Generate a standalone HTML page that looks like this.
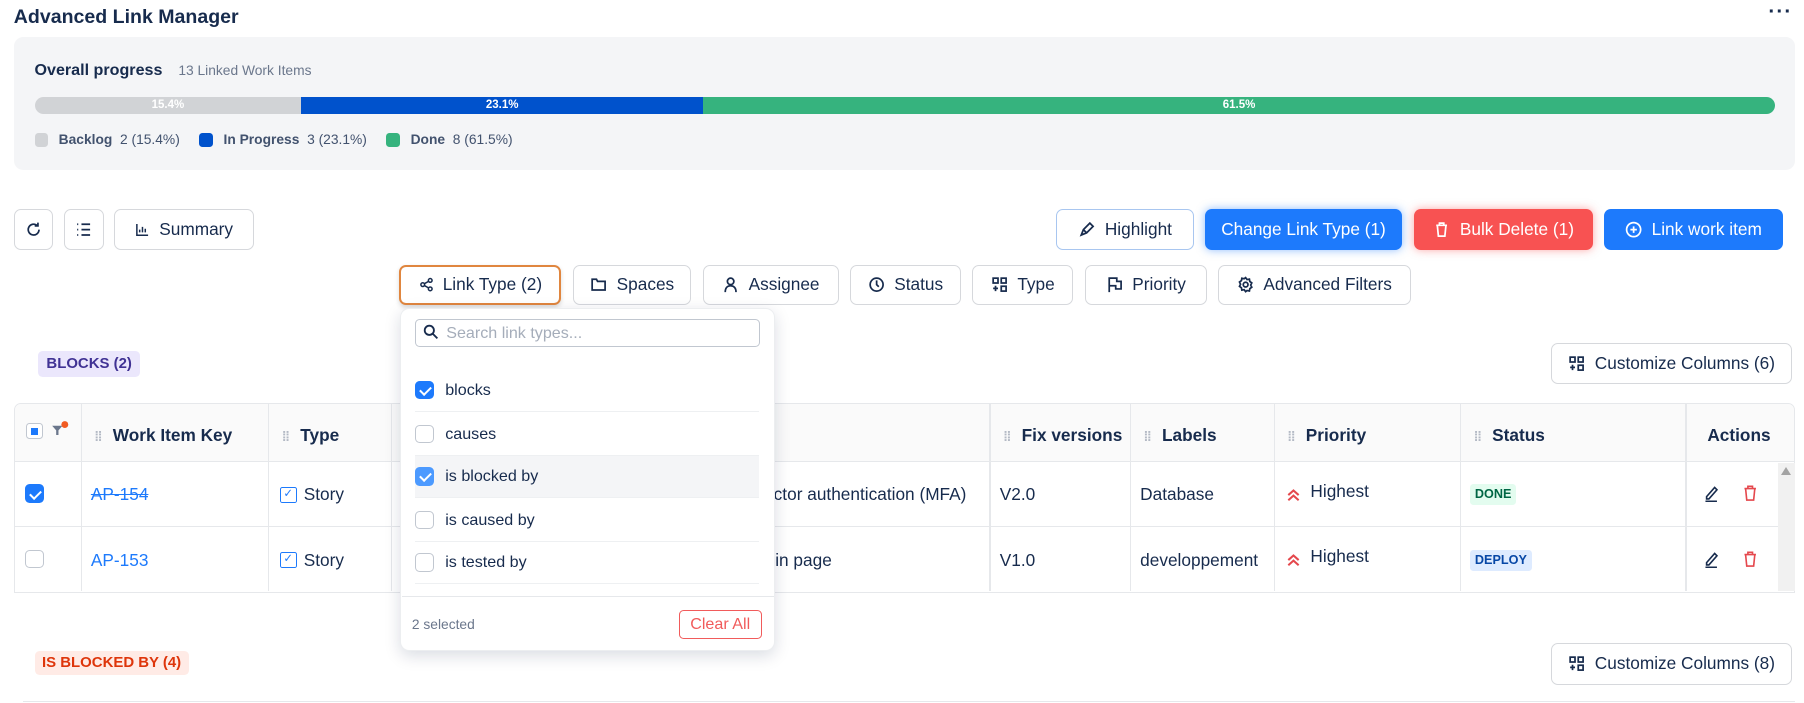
<!DOCTYPE html>
<html><head><meta charset="utf-8"><style>
*{box-sizing:border-box;margin:0;padding:0}
html,body{width:1804px;height:703px;overflow:hidden;background:#fff}
#z{zoom:1.1505;width:1568px;height:611px;position:relative;font-family:"Liberation Sans",sans-serif;color:#172b4d}
.a{position:absolute}
.btn{position:absolute;border:1px solid #d6d8dc;border-radius:6px;background:#fff;display:flex;align-items:center;justify-content:center;gap:8px;font-size:15px;color:#172b4d;height:35px}
.btn svg{width:15px;height:15px;fill:none;stroke:#172b4d;stroke-width:1.6}
.pb{color:#fff;border:none}
.pb svg{stroke:#fff}
.hd{position:absolute;top:369px;font-size:15px;font-weight:bold;color:#172b4d}
.dots{color:#b3b9c4;font-size:12px;margin-right:10px;letter-spacing:-1px}
.vl{position:absolute;top:350px;width:1px;height:164px;background:#e6e8eb}
.td{position:absolute;font-size:15px;color:#172b4d}
.cb{position:absolute;width:16px;height:16px;border:1px solid #c1c7d0;border-radius:4px;background:#fff}
.cb.on{background:#1d7afc;border-color:#1d7afc}
.cb.on:after{content:"";position:absolute;left:5px;top:2px;width:4px;height:8px;border:solid #fff;border-width:0 2px 2px 0;transform:rotate(45deg)}
.it{position:absolute;left:361px;width:299px;height:37px;font-size:14px;color:#172b4d;border-bottom:1px solid #eef0f2}
.it .cb{left:0;top:10px}
.it span{position:absolute;left:26px;top:10px}
</style></head><body><div id="z">
<div class="a" style="left:12px;top:5px;font-size:17px;font-weight:bold">Advanced Link Manager</div>
<div class="a" style="left:1537px;top:0px;font-size:18px;font-weight:bold;letter-spacing:1px">···</div>

<div class="a" style="left:12px;top:32px;width:1548px;height:116px;background:#f4f5f7;border-radius:8px"></div>
<div class="a" style="left:30px;top:53px;font-size:14px;font-weight:bold">Overall progress</div>
<div class="a" style="left:155px;top:55px;font-size:12px;color:#6b778c">13 Linked Work Items</div>
<div class="a" style="left:30px;top:84px;width:1513px;height:15px;border-radius:8px;overflow:hidden;display:flex;font-size:10px;font-weight:bold;color:#fff;line-height:15px;text-align:center">
<div style="width:232px;background:#d1d3d6">15.4%</div><div style="width:349px;background:#0052cc">23.1%</div><div style="flex:1;background:#36b37e">61.5%</div></div>
<div class="a" style="left:30px;top:115px;font-size:12px;color:#42526e;display:flex;align-items:center;line-height:14px">
<i style="width:12px;height:12px;background:#d1d3d6;border-radius:3px;margin-right:9px"></i><b>Backlog</b>&nbsp;&nbsp;2 (15.4%)
<i style="width:12px;height:12px;background:#0052cc;border-radius:3px;margin:0 9px 0 17px"></i><b>In Progress</b>&nbsp;&nbsp;3 (23.1%)
<i style="width:12px;height:12px;background:#36b37e;border-radius:3px;margin:0 9px 0 17px"></i><b>Done</b>&nbsp;&nbsp;8 (61.5%)</div>

<div class="btn" style="left:12px;top:182px;width:34px"><svg viewBox="0 0 16 16"><path d="M13 8a5 5 0 1 1-1.5-3.6M12 1.5v3h-3"/></svg></div>
<div class="btn" style="left:56px;top:182px;width:34px"><svg viewBox="0 0 16 16"><path d="M6 3h8M6 8h8M6 13h8M2 3h1M2 8h1M2 13h1"/></svg></div>
<div class="btn" style="left:99px;top:182px;width:122px"><svg viewBox="0 0 16 16" style="width:13px"><path d="M2 2v12h12M5 11V8M8 11V5M11 11V7"/></svg>Summary</div>
<div class="btn" style="left:918px;top:182px;width:120px;border-color:#a8c6f0"><svg viewBox="0 0 16 16"><path d="M3 13l2-5 6-6 3 3-6 6-5 2zM5 8l3 3"/></svg>Highlight</div>
<div class="btn pb" style="left:1047px;top:182px;width:172px;background:#1d7afc;box-shadow:0 0 8px rgba(29,122,252,.5)">Change Link Type (1)</div>
<div class="btn pb" style="left:1229px;top:182px;width:156px;background:#f85252;box-shadow:0 0 8px rgba(248,82,82,.5)"><svg viewBox="0 0 16 16"><path d="M3 4h10M6 4V2h4v2M4 4l1 10h6l1-10"/></svg>Bulk Delete (1)</div>
<div class="btn pb" style="left:1394px;top:182px;width:156px;background:#1d7afc"><svg viewBox="0 0 16 16"><circle cx="8" cy="8" r="6.5"/><path d="M8 5v6M5 8h6"/></svg>Link work item</div>

<div class="btn" style="left:347px;top:230px;width:141px;border:2px solid #e0863f;box-shadow:0 2px 4px rgba(0,0,0,.15)"><svg viewBox="0 0 16 16" style="width:13px"><circle cx="4" cy="8" r="2"/><circle cx="12" cy="3.5" r="2"/><circle cx="12" cy="12.5" r="2"/><path d="M5.8 7l4.4-2.5M5.8 9l4.4 2.5"/></svg>Link Type (2)</div>
<div class="btn" style="left:498px;top:230px;width:103px"><svg viewBox="0 0 16 16"><path d="M2 3h4l1 2h7v8H2z"/></svg>Spaces</div>
<div class="btn" style="left:611px;top:230px;width:118px"><svg viewBox="0 0 16 16"><circle cx="8" cy="5" r="3"/><path d="M3 15c0-4 2-6 5-6s5 2 5 6"/></svg>Assignee</div>
<div class="btn" style="left:739px;top:230px;width:96px"><svg viewBox="0 0 16 16"><circle cx="8" cy="8" r="6"/><path d="M8 4v4l2 2"/></svg>Status</div>
<div class="btn" style="left:845px;top:230px;width:88px"><svg viewBox="0 0 16 16"><rect x="2" y="2" width="4.5" height="4.5"/><rect x="9.5" y="2" width="4.5" height="4.5"/><rect x="9.5" y="9.5" width="4.5" height="4.5"/><path d="M4.2 9v5M2 11.5h4.5"/></svg>Type</div>
<div class="btn" style="left:943px;top:230px;width:106px"><svg viewBox="0 0 16 16"><path d="M3 15V2h7v3h4v7H9V9H3"/></svg>Priority</div>
<div class="btn" style="left:1059px;top:230px;width:167px"><svg viewBox="0 0 16 16"><circle cx="8" cy="8" r="2.2"/><path d="M8 1.5l1.3 1.8 2.2-.4.4 2.2 1.8 1.3-1 2 1 2-1.8 1.3-.4 2.2-2.2-.4L8 14.5l-1.3-1.8-2.2.4-.4-2.2L2.3 9.6l1-2-1-2 1.8-1.3.4-2.2 2.2.4z"/></svg>Advanced Filters</div>

<div class="a" style="left:33px;top:305px;width:89px;height:23px;background:#ebe7fc;border-radius:4px;color:#403294;font-size:13px;font-weight:bold;text-align:center;line-height:23px">BLOCKS (2)</div>
<div class="btn" style="left:1348px;top:298px;width:210px;height:36px"><svg viewBox="0 0 16 16"><rect x="2" y="2" width="4.5" height="4.5"/><rect x="9.5" y="2" width="4.5" height="4.5"/><rect x="9.5" y="9.5" width="4.5" height="4.5"/><path d="M4.2 9v5M2 11.5h4.5"/></svg>Customize Columns (6)</div>

<div class="a" style="left:12px;top:350px;width:1548px;height:165px;border:1px solid #e6e8eb;border-radius:6px 6px 0 0"></div>
<div class="a" style="left:13px;top:351px;width:1546px;height:51px;background:#fafafa;border-bottom:1px solid #e6e8eb;border-radius:6px 6px 0 0"></div>
<div class="a" style="left:13px;top:457px;width:1532px;height:1px;background:#e6e8eb"></div>
<div class="vl" style="left:70px"></div><div class="vl" style="left:233px"></div><div class="vl" style="left:340px"></div><div class="vl" style="left:860px"></div><div class="vl" style="left:982px"></div><div class="vl" style="left:1107px"></div><div class="vl" style="left:1269px"></div><div class="vl" style="left:1465px"></div>
<div class="cb" style="left:23px;top:368px;width:14px;height:14px;border-radius:3px"><i style="position:absolute;left:3px;top:3px;width:6px;height:6px;background:#1d7afc"></i></div>
<svg class="a" style="left:44px;top:365px" width="16" height="16" viewBox="0 0 16 16"><path d="M1 5h9l-3.5 4v4h-2V9z" fill="#6b778c"/><circle cx="12" cy="4" r="3" fill="#f15b22"/></svg>
<div class="hd" style="left:82px"><span class="dots">⁞⁞</span>Work Item Key</div>
<div class="hd" style="left:245px"><span class="dots">⁞⁞</span>Type</div>
<div class="hd" style="left:872px"><span class="dots">⁞⁞</span>Fix versions</div>
<div class="hd" style="left:994px"><span class="dots">⁞⁞</span>Labels</div>
<div class="hd" style="left:1119px"><span class="dots">⁞⁞</span>Priority</div>
<div class="hd" style="left:1281px"><span class="dots">⁞⁞</span>Status</div>
<div class="hd" style="left:1484px">Actions</div>

<div class="cb on" style="left:22px;top:421px"></div>
<div class="cb" style="left:22px;top:478px"></div>
<div class="td" style="left:79px;top:421px;color:#1d7afc;text-decoration:line-through">AP-154</div>
<div class="td" style="left:79px;top:478px;color:#1d7afc">AP-153</div>
<div class="td" style="left:243px;top:421px;display:flex;align-items:center;gap:6px"><span style="width:15px;height:14px;border:1.5px solid #1d7afc;border-radius:2px;color:#1d7afc;font-size:10px;line-height:11px;text-align:center">✓</span>Story</div>
<div class="td" style="left:243px;top:478px;display:flex;align-items:center;gap:6px"><span style="width:15px;height:14px;border:1.5px solid #1d7afc;border-radius:2px;color:#1d7afc;font-size:10px;line-height:11px;text-align:center">✓</span>Story</div>
<div class="td" style="left:340px;width:500px;text-align:right;top:421px">Implement multi-factor authentication (MFA)</div>
<div class="td" style="left:340px;width:383px;text-align:right;top:478px">Design the login page</div>
<div class="td" style="left:869px;top:421px">V2.0</div><div class="td" style="left:869px;top:478px">V1.0</div>
<div class="td" style="left:991px;top:421px">Database</div><div class="td" style="left:991px;top:478px">developpement</div>
<svg class="a" style="left:1118px;top:423px" width="13" height="13" viewBox="0 0 13 13" fill="none" stroke="#e5484d" stroke-width="1.8"><path d="M2 7l4.5-4 4.5 4M2 11.5l4.5-4 4.5 4"/></svg>
<svg class="a" style="left:1118px;top:480px" width="13" height="13" viewBox="0 0 13 13" fill="none" stroke="#e5484d" stroke-width="1.8"><path d="M2 7l4.5-4 4.5 4M2 11.5l4.5-4 4.5 4"/></svg>
<div class="td" style="left:1139px;top:418px">Highest</div>
<div class="td" style="left:1139px;top:475px">Highest</div>
<div class="a" style="left:1278px;top:421px;height:18px;padding:0 4px;background:#e3fcef;color:#006644;font-size:11px;font-weight:bold;line-height:18px;border-radius:3px">DONE</div>
<div class="a" style="left:1278px;top:478px;height:18px;padding:0 4px;background:#deebff;color:#0747a6;font-size:11px;font-weight:bold;line-height:18px;border-radius:3px">DEPLOY</div>
<svg class="a" style="left:1479px;top:421px" width="16" height="16" viewBox="0 0 16 16" fill="none" stroke="#172b4d" stroke-width="1.4"><path d="M4 11l7-8 2 2-7 8H4zM3 15h10"/></svg>
<svg class="a" style="left:1479px;top:478px" width="16" height="16" viewBox="0 0 16 16" fill="none" stroke="#172b4d" stroke-width="1.4"><path d="M4 11l7-8 2 2-7 8H4zM3 15h10"/></svg>
<svg class="a" style="left:1513px;top:421px" width="16" height="16" viewBox="0 0 16 16" fill="none" stroke="#e5484d" stroke-width="1.4"><path d="M3 4h10M6 4V2h4v2M4 4l1 10h6l1-10"/></svg>
<svg class="a" style="left:1513px;top:478px" width="16" height="16" viewBox="0 0 16 16" fill="none" stroke="#e5484d" stroke-width="1.4"><path d="M3 4h10M6 4V2h4v2M4 4l1 10h6l1-10"/></svg>
<div class="a" style="left:1545px;top:402px;width:15px;height:112px;background:#f1f1f1"></div>
<div class="a" style="left:1548px;top:406px;width:0;height:0;border-left:5px solid transparent;border-right:5px solid transparent;border-bottom:7px solid #a3a3a3"></div>

<div class="a" style="left:30px;top:566px;width:134px;height:21px;background:#ffebe6;border-radius:4px;color:#de350b;font-size:13px;font-weight:bold;text-align:center;line-height:21px">IS BLOCKED BY (4)</div>
<div class="btn" style="left:1348px;top:559px;width:210px;height:36px"><svg viewBox="0 0 16 16"><rect x="2" y="2" width="4.5" height="4.5"/><rect x="9.5" y="2" width="4.5" height="4.5"/><rect x="9.5" y="9.5" width="4.5" height="4.5"/><path d="M4.2 9v5M2 11.5h4.5"/></svg>Customize Columns (8)</div>
<div class="a" style="left:20px;top:609px;width:1540px;height:1px;background:#e6e8eb"></div>

<div class="a" style="left:348px;top:268px;width:326px;height:298px;background:#fff;border:1px solid #eceef0;border-radius:8px;box-shadow:0 4px 14px rgba(9,30,66,.15)"></div>
<div class="a" style="left:361px;top:277px;width:300px;height:25px;border:1px solid #c1c7d0;border-radius:4px;font-size:14px;color:#a5adba;line-height:23px;padding-left:26px">Search link types...</div>
<svg class="a" style="left:368px;top:282px" width="14" height="14" viewBox="0 0 14 14" fill="none" stroke="#172b4d" stroke-width="1.6"><circle cx="5.5" cy="5.5" r="4"/><path d="M8.5 8.5l4 4"/></svg>
<div class="it" style="top:321px"><div class="cb on"></div><span>blocks</span></div>
<div class="it" style="top:359px"><div class="cb"></div><span>causes</span></div>
<div class="it" style="top:396px;background:#f4f5f7"><div class="cb on" style="background:#4c9aff;border-color:#4c9aff"></div><span>is blocked by</span></div>
<div class="it" style="top:434px"><div class="cb"></div><span>is caused by</span></div>
<div class="it" style="top:471px"><div class="cb"></div><span>is tested by</span></div>
<div class="a" style="left:349px;top:518px;width:324px;height:1px;background:#e6e8eb"></div>
<div class="a" style="left:358px;top:536px;font-size:12px;color:#6b778c">2 selected</div>
<div class="a" style="left:590px;top:530px;width:72px;height:25px;border:1px solid #f15b5b;border-radius:4px;color:#f15b5b;font-size:14px;text-align:center;line-height:23px">Clear All</div>
</div></body></html>
